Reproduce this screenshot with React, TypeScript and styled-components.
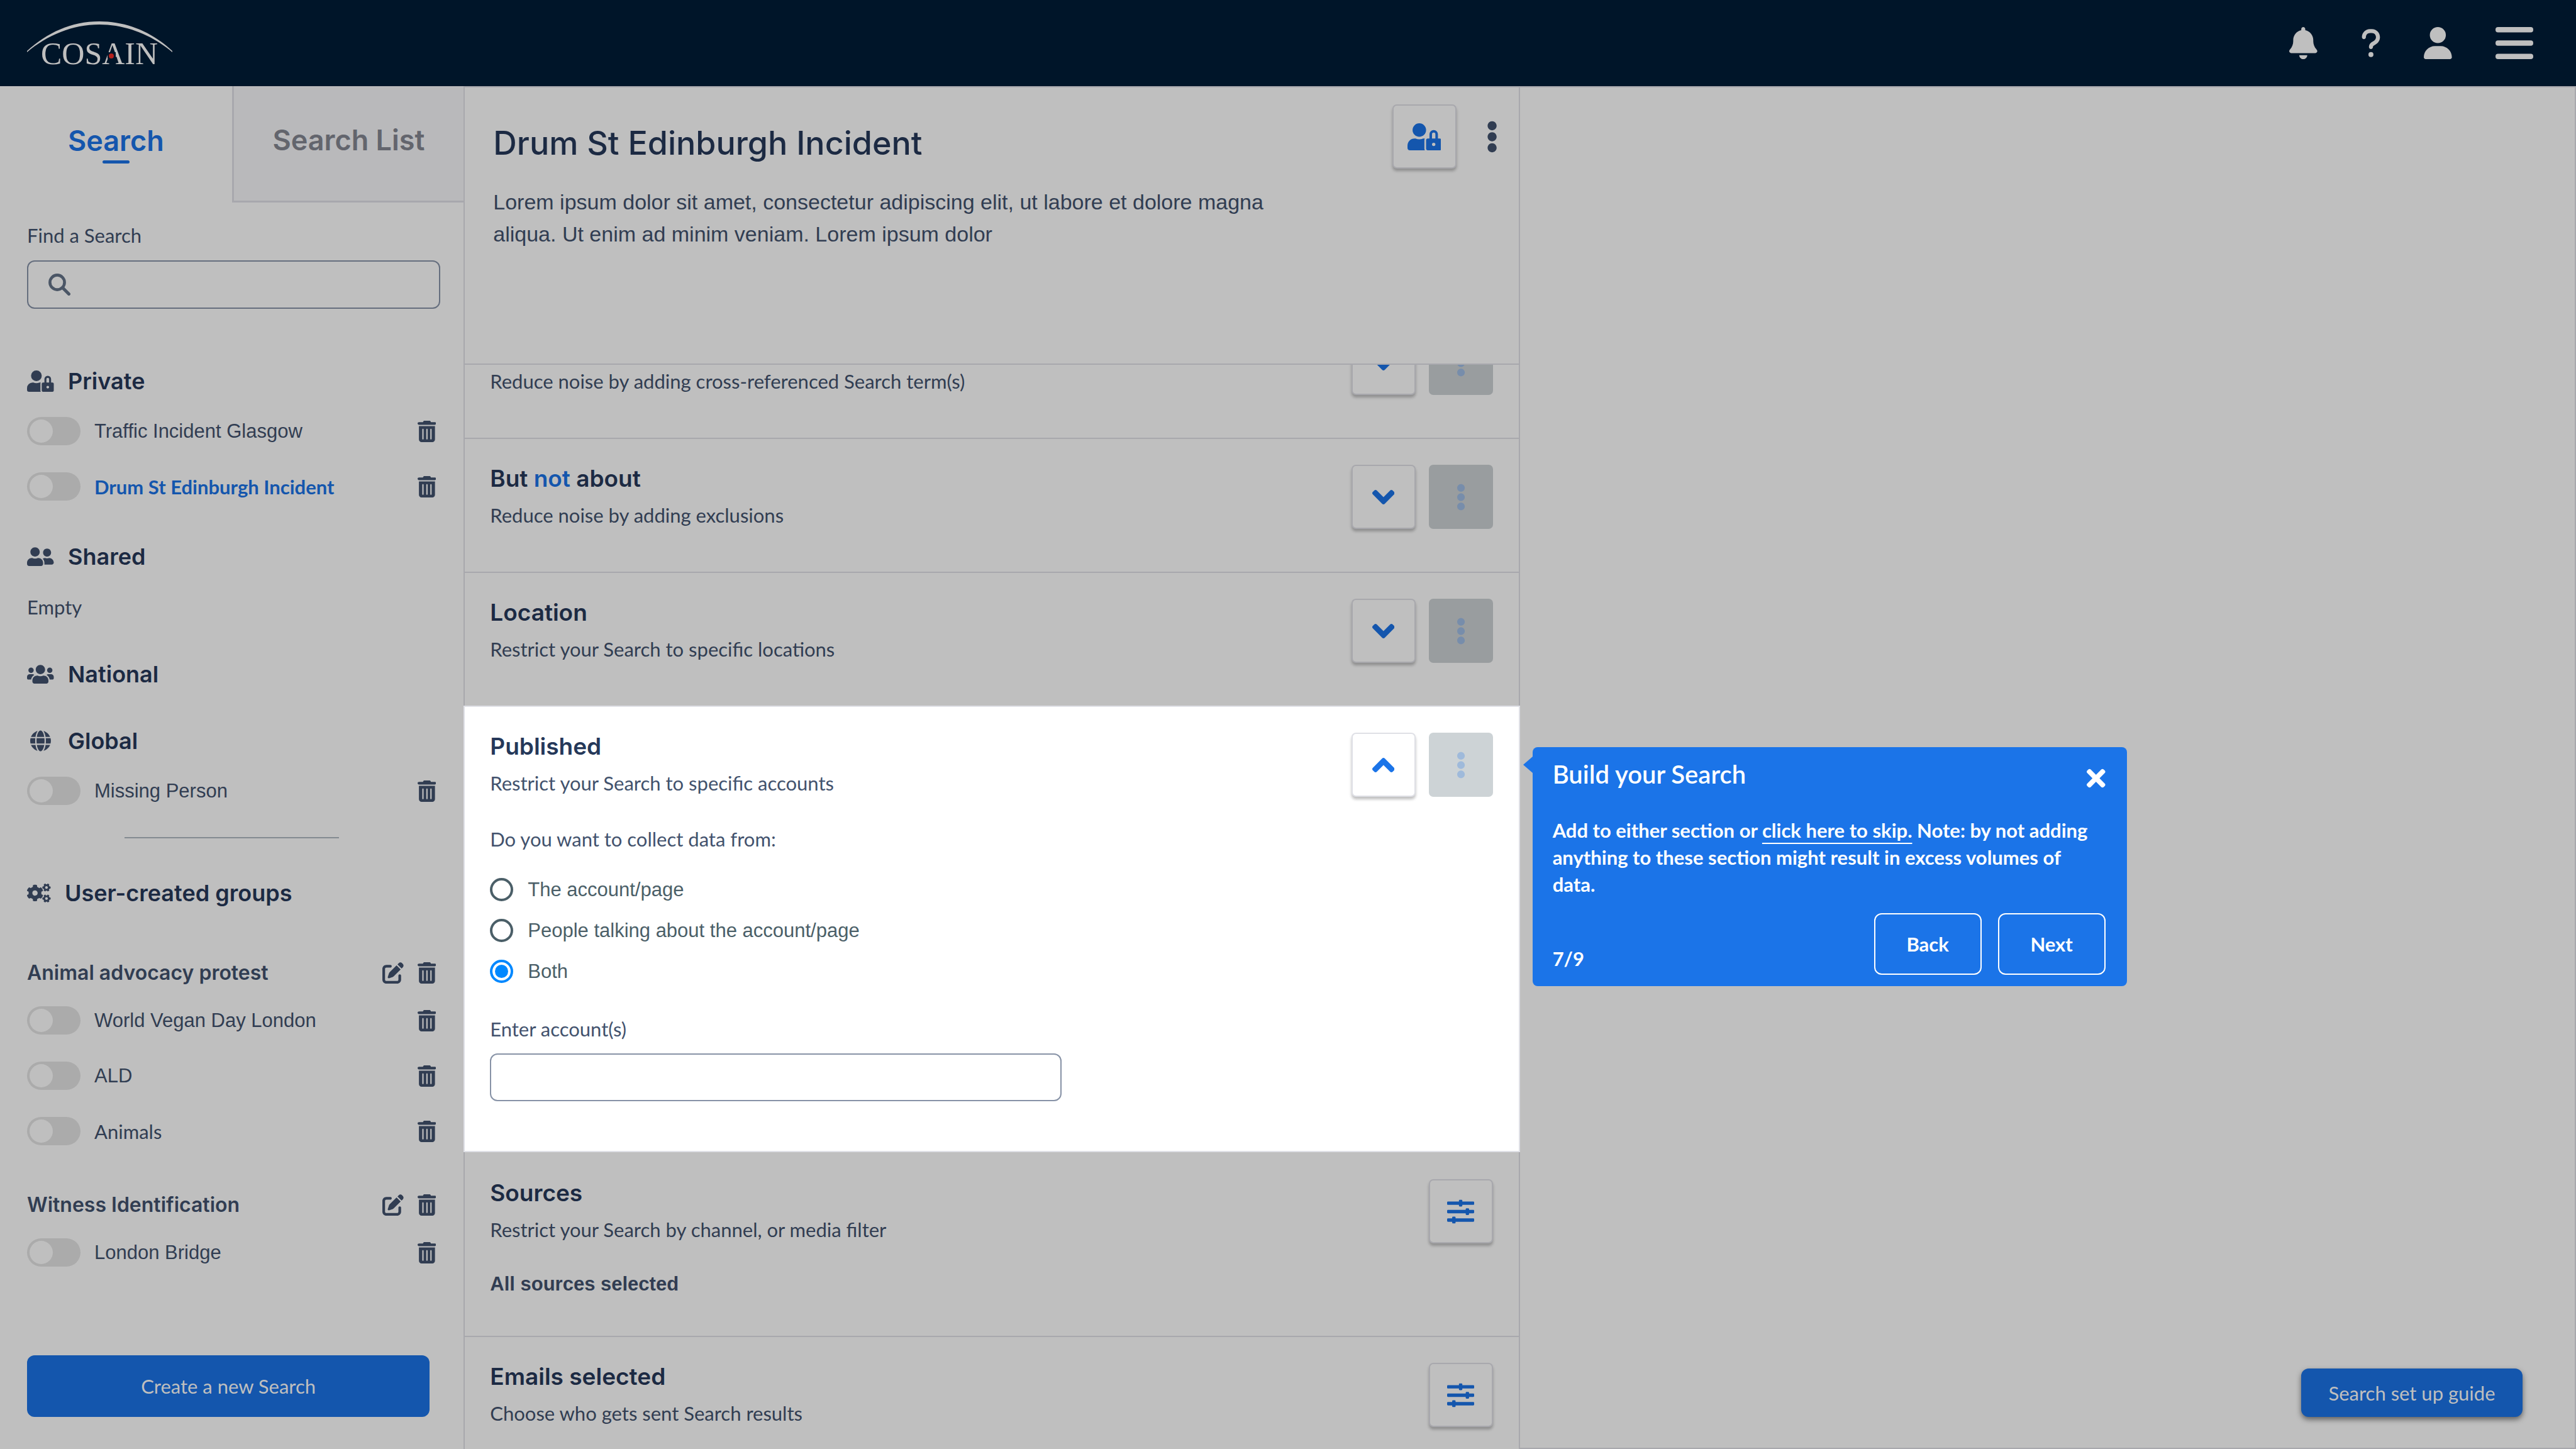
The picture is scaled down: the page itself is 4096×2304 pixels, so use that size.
import React, { useId, useLayoutEffect, useRef, useState } from "react";
import styled, { createGlobalStyle, css, ThemeProvider } from "styled-components";
import { IconContext } from "react-icons";
import {
  FaAngleDown,
  FaAngleUp,
  FaCogs,
  FaEllipsisV,
  FaGlobe,
  FaSlidersH,
  FaTimes,
  FaUserFriends,
  FaUserLock,
  FaUsers,
} from "react-icons/fa";
import { FaBell, FaPenToSquare, FaQuestion, FaTrashCan, FaUser } from "react-icons/fa6";

/* Palettes: the page sits behind the guide's backdrop, the current step is lit. */
const shaded = {
  surface: "#bfbfbf",
  line: "#a8a8ad",
  title: "#1c2a43",
  text: "#313d52",
  field: "#656e7e",
  accent: "#1456ad",
  mutedBg: "#999d9f",
  mutedFg: "#778dab",
};

const lit: typeof shaded = {
  surface: "#ffffff",
  line: "#dfe0e6",
  title: "#253859",
  text: "#42526d",
  field: "#8792a6",
  accent: "#1b74e8",
  mutedBg: "#cdd3d6",
  mutedFg: "#9fbadb",
};

type Palette = typeof shaded;
const c = (key: keyof Palette) => (p: { theme: any }) => (p.theme as Palette)[key];

const sans = `Lato, "Open Sans", sans-serif`;
const display = `Inter, "Open Sans", sans-serif`;
const plain = `"Liberation Sans", Arial, sans-serif`;

const GlobalStyle = createGlobalStyle`
  * { box-sizing: border-box; }
  body { margin: 0; background: #bfbfbf; font-family: ${sans}; font-size: 31px; line-height: 36px; font-optical-sizing: none; }
  h1, h2, h3, p, ul, fieldset { margin: 0; padding: 0; border: 0; font-weight: inherit; font-size: inherit; }
  ul { list-style: none; }
  button, input { font: inherit; }
  svg { display: block; }
`;

/* Icons take their width from their own proportions once a height is set. */
const iconDefaults = { size: "100%" };

const bareButton = css`
  padding: 0;
  border: 0;
  background: none;
  color: inherit;
  cursor: pointer;
`;

const Page = styled.div`
  display: grid;
  grid-template-rows: auto minmax(0, 1fr);
  height: 100vh;
  color: ${c("text")};
`;

/* Top bar */

const TopBar = styled.header`
  display: flex;
  align-items: center;
  justify-content: space-between;
  height: 137px;
  padding: 0 68px 0 43px;
  background: #001529;
  color: #bfbfbf;
`;

const TopActions = styled.nav`
  display: flex;
  gap: 69px;
`;

const TopButton = styled.button`
  ${bareButton}
  svg {
    width: auto;
    height: 51px;
  }
`;

const Columns = styled.div`
  display: grid;
  grid-template-columns: 18% 41% minmax(0, 1fr);
  min-height: 0;
`;

/* Sidebar */

const Sidebar = styled.aside`
  display: flex;
  flex-direction: column;
  min-height: 0;
  background: ${c("surface")};
`;

const Tabs = styled.div`
  display: grid;
  grid-template-columns: 1fr 1fr;
  height: 185px;
`;

const Tab = styled.button<{ $active?: boolean }>`
  ${bareButton}
  display: flex;
  flex-direction: column;
  align-items: center;
  justify-content: center;
  gap: 6px;
  font: 600 45px/50px ${display};
  color: ${(p) => (p.$active ? "#1456ad" : "#63656d")};
  ${(p) =>
    !p.$active &&
    css`
      background: #b9b9bb;
      border: solid ${c("line")};
      border-width: 0 0 3px 3px;
    `}
  &::after {
    content: "";
    width: 43px;
    height: 5px;
    border-radius: 3px;
    background: ${(p) => (p.$active ? "currentColor" : "transparent")};
  }
`;

const SidebarBody = styled.div`
  display: flex;
  flex: 1;
  flex-direction: column;
  padding: 34px 37px 51px 43px;
`;

const Finder = styled.form`
  display: flex;
  flex-direction: column;
  gap: 22px;
  margin-bottom: 98px;
`;

const FinderBox = styled.div`
  display: flex;
  align-items: center;
  gap: 20px;
  height: 77px;
  padding: 0 32px;
  border: 2px solid ${c("field")};
  border-radius: 12px;
  color: #4b5666;
`;

const FinderInput = styled.input`
  flex: 1;
  min-width: 0;
  border: 0;
  outline: 0;
  background: none;
  color: inherit;
`;

const GroupList = styled.div`
  display: flex;
  flex-direction: column;
  gap: 72px;
`;

const GroupTitle = styled.h2<{ $iconWidth?: number }>`
  display: flex;
  align-items: center;
  gap: 22px;
  height: 34px;
  font: 600 36px/34px ${display};
  color: ${c("title")};
  span {
    display: flex;
    justify-content: center;
    width: ${(p) => p.$iconWidth ?? 43}px;
    color: ${c("text")};
  }
  svg {
    width: auto;
    height: ${(p) => (p.$iconWidth ? 30 : 34)}px;
  }
`;

const Items = styled.ul`
  display: flex;
  flex-direction: column;
  gap: 43px;
  margin-top: 40px;
`;

const EmptyNote = styled.p`
  margin-top: 45px;
`;

const Row = styled.li`
  display: flex;
  align-items: center;
  gap: 22px;
  height: 45px;
  padding-right: 7px;
`;

type LabelKind = "plain" | "soft" | "current";

const labelFonts: Record<LabelKind, string> = {
  plain: `400 31px/36px ${plain}`,
  soft: `400 31px/36px ${sans}`,
  current: `700 31px/36px ${sans}`,
};

const RowLabel = styled.label<{ $kind: LabelKind }>`
  flex: 1;
  font: ${(p) => labelFonts[p.$kind]};
  color: ${(p) => (p.$kind === "current" ? "#1456ad" : "inherit")};
`;

const Switch = styled.input`
  appearance: none;
  flex: none;
  width: 85px;
  height: 45px;
  margin: 0;
  padding: 4px;
  border-radius: 23px;
  background: #ababab;
  cursor: pointer;
  &::before {
    content: "";
    display: block;
    width: 37px;
    height: 37px;
    border-radius: 50%;
    background: #bfbfbf;
  }
  &:checked::before {
    margin-left: auto;
  }
`;

const IconAction = styled.button`
  ${bareButton}
  svg {
    width: auto;
    height: 34px;
  }
`;

const Divider = styled.hr`
  width: 341px;
  height: 2px;
  margin: 51px auto 70px 155px;
  border: 0;
  background: #838a90;
`;

const SubGroup = styled.section<{ $first?: boolean }>`
  margin-top: ${(p) => (p.$first ? 93 : 78)}px;
  ${Items} {
    margin-top: 36px;
  }
`;

const SubGroupTitle = styled.div`
  display: flex;
  align-items: center;
  gap: 22px;
  height: 34px;
  padding-right: 7px;
  h3 {
    flex: 1;
    font: 600 32px/34px ${display};
  }
`;

const PrimaryButton = styled.button`
  ${bareButton}
  border-radius: 12px;
  background: #1456ad;
  color: #bfbfbf;
`;

const CreateButton = styled(PrimaryButton)`
  height: 98px;
  margin: auto 17px 0 0;
`;

/* Search builder */

const Builder = styled.main`
  display: flex;
  flex-direction: column;
  min-height: 0;
  background: ${c("surface")};
`;

const BuilderHeader = styled.header`
  display: flex;
  justify-content: space-between;
  height: 443px;
  flex: none;
  padding: 27px 33px 0 45px;
  border: 2px solid ${c("line")};
`;

const BuilderTitle = styled.h1`
  margin-top: 34px;
  font: 500 52px/56px ${display};
  color: ${c("title")};
`;

const BuilderText = styled.p`
  max-width: 1300px;
  margin-top: 40px;
  font: 400 34px/51px ${plain};
`;

const HeaderActions = styled.div`
  display: flex;
  gap: 47px;
  height: 102px;
`;

const MoreButton = styled.button`
  ${bareButton}
  svg {
    width: auto;
    height: 51px;
  }
`;

const Sections = styled.div`
  flex: 1;
  min-height: 0;
  overflow-y: auto;
  scrollbar-width: none;
`;

const Section = styled.section<{ $lit?: boolean; $afterLit?: boolean }>`
  min-height: 213px;
  padding: ${(p) => (p.$afterLit ? "43px 41px 64px 40px" : "41px 41px 68px 40px")};
  border: 2px solid ${c("line")};
  border-bottom-width: ${(p) => (p.$lit ? 2 : 0)}px;
  border-top-width: ${(p) => (p.$afterLit ? 0 : 2)}px;
  background: ${c("surface")};
  color: ${c("text")};
`;

const SectionHead = styled.div`
  display: flex;
  justify-content: space-between;
  height: 102px;
`;

const SectionTitle = styled.h2`
  height: 44px;
  margin-bottom: 18px;
  font: 600 37px/44px ${display};
  color: ${c("title")};
  em {
    font-style: normal;
    color: ${c("accent")};
  }
`;

const SectionActions = styled.div`
  display: flex;
  gap: 21px;
`;

const SquareButton = styled.button<{ $icon?: number }>`
  ${bareButton}
  display: grid;
  place-items: center;
  width: 102px;
  height: 102px;
  border: 2px solid ${c("line")};
  border-radius: 7px;
  background: ${c("surface")};
  box-shadow: 0 4px 4px rgba(0, 0, 0, 0.25);
  color: ${c("accent")};
  svg {
    width: auto;
    height: ${(p) => p.$icon ?? 43}px;
  }
  &:disabled {
    border: 0;
    background: ${c("mutedBg")};
    box-shadow: none;
    color: ${c("mutedFg")};
    cursor: default;
  }
`;

const Strong = styled.p`
  margin-top: 47px;
  font: 700 31px/36px ${plain};
`;

const Choices = styled.fieldset`
  display: flex;
  flex-direction: column;
  gap: 28px;
  margin-top: 49px;
  legend {
    margin-bottom: 44px;
    padding: 0;
  }
`;

const Choice = styled.label`
  display: flex;
  align-items: center;
  gap: 23px;
  height: 37px;
  font: 400 31px/36px ${plain};
  color: #4b5f68;
`;

const Radio = styled.input`
  appearance: none;
  display: grid;
  place-items: center;
  width: 37px;
  height: 37px;
  margin: 0;
  border: 4px solid #4b5f68;
  border-radius: 50%;
  &:checked {
    border-color: #0088ff;
  }
  &:checked::before {
    content: "";
    width: 21px;
    height: 21px;
    border-radius: 50%;
    background: #0088ff;
  }
`;

const Field = styled.div`
  display: flex;
  flex-direction: column;
  gap: 21px;
  margin-top: 55px;
  padding-bottom: 11px;
`;

const TextInput = styled.input`
  width: 57%;
  height: 76px;
  padding: 0 24px;
  border: 2px solid ${c("field")};
  border-radius: 12px;
  background: none;
  color: inherit;
`;

/* Results pane and guide */

const Results = styled.section`
  position: relative;
  display: flex;
  align-items: flex-end;
  justify-content: flex-end;
  padding: 0 83px 49px 0;
  border: solid ${c("line")};
  border-width: 2px 2px 2px 0;
  background: ${c("surface")};
`;

const GuideButton = styled(PrimaryButton)`
  width: 352px;
  height: 77px;
  box-shadow: 0 4px 8px rgba(0, 0, 0, 0.5);
`;

const Guide = styled.div`
  position: absolute;
  top: 1049px;
  left: 20px;
  width: 945px;
  padding: 22px 34px 18px 32px;
  border-radius: 8px;
  background: #1b74e8;
  color: #ffffff;
  font-weight: 700;
  &::before {
    content: "";
    position: absolute;
    top: 15px;
    left: -15px;
    border: solid transparent;
    border-width: 13px 15px 13px 0;
    border-right-color: #1b74e8;
  }
`;

const GuideHead = styled.div`
  display: flex;
  justify-content: space-between;
  align-items: flex-start;
  h2 {
    font: 600 40px/43px ${sans};
  }
`;

const CloseButton = styled.button`
  ${bareButton}
  padding-top: 6px;
  svg {
    width: auto;
    height: 43px;
  }
`;

const GuideText = styled.p`
  margin-top: 40px;
  padding-right: 16px;
  line-height: 43px;
`;

const SkipLink = styled.a`
  color: inherit;
  text-decoration: underline;
  text-decoration-thickness: 2px;
  text-underline-offset: 8px;
  text-decoration-skip-ink: none;
`;

const GuideFoot = styled.div`
  display: flex;
  align-items: flex-end;
  gap: 26px;
  margin-top: 24px;
`;

const StepCount = styled.span`
  flex: 1;
  padding-bottom: 8px;
`;

const OutlineButton = styled.button`
  ${bareButton}
  width: 171px;
  height: 98px;
  border: 2px solid #ffffff;
  border-radius: 12px;
  font-weight: 700;
`;

/* Drawings */

const Logo = () => (
  <svg width="231" height="90" viewBox="0 -10 231 90" role="img" aria-label="Cosain">
    <path
      d="M0 47C32 18 70 0 115 0S200 18 231 47V49C199 22 158 5 115 5S32 22 0 49Z"
      fill="#bfbfbf"
    />
    <text x="22" y="68" fontFamily="'Liberation Serif', serif" fontSize="50" fill="#bfbfbf">
      COSAIN
    </text>
    <rect x="128" y="49" width="13" height="10" fill="#001529" />
    <circle cx="134" cy="55" r="4" fill="#b5201c" />
  </svg>
);

const Menu = () => (
  <svg viewBox="0 0 60 51" fill="currentColor" aria-hidden="true">
    <rect width="60" height="8.5" rx="4" />
    <rect y="21.25" width="60" height="8.5" rx="4" />
    <rect y="42.5" width="60" height="8.5" rx="4" />
  </svg>
);

const Magnifier = () => (
  <svg width="35" height="35" viewBox="0 0 35 35" fill="none" stroke="currentColor" aria-hidden="true">
    <circle cx="14" cy="14" r="11.6" strokeWidth="4.6" />
    <path d="M22.5 22.5L32.5 32.5" strokeWidth="5" strokeLinecap="round" />
  </svg>
);

/* Composed parts */

function SearchRow({ name, kind = "plain" }: { name: string; kind?: LabelKind }) {
  const id = useId();
  const [on, setOn] = useState(false);
  return (
    <Row>
      <Switch id={id} type="checkbox" role="switch" checked={on} onChange={() => setOn(!on)} />
      <RowLabel htmlFor={id} $kind={kind}>
        {name}
      </RowLabel>
      <IconAction aria-label={`Delete ${name}`}>
        <FaTrashCan />
      </IconAction>
    </Row>
  );
}

type UserGroupProps = { name: string; first?: boolean; children: React.ReactNode };

function UserGroup({ name, first, children }: UserGroupProps) {
  return (
    <SubGroup $first={first}>
      <SubGroupTitle>
        <h3>{name}</h3>
        <IconAction aria-label={`Edit ${name}`}>
          <FaPenToSquare />
        </IconAction>
        <IconAction aria-label={`Delete ${name}`}>
          <FaTrashCan />
        </IconAction>
      </SubGroupTitle>
      <Items>{children}</Items>
    </SubGroup>
  );
}

type SectionHeaderProps = { title?: React.ReactNode; hint: string; action: "down" | "up" | "filter" };

function SectionHeader({ title, hint, action }: SectionHeaderProps) {
  return (
    <SectionHead>
      <div>
        <SectionTitle>{title}</SectionTitle>
        <p>{hint}</p>
      </div>
      <SectionActions>
        {action === "filter" ? (
          <SquareButton aria-label="Edit">
            <FaSlidersH />
          </SquareButton>
        ) : (
          <>
            <SquareButton $icon={57} aria-label={action === "up" ? "Collapse" : "Expand"}>
              {action === "up" ? <FaAngleUp /> : <FaAngleDown />}
            </SquareButton>
            <SquareButton disabled aria-label="More options">
              <FaEllipsisV />
            </SquareButton>
          </>
        )}
      </SectionActions>
    </SectionHead>
  );
}

const sources = ["The account/page", "People talking about the account/page", "Both"];

export default function App() {
  const [source, setSource] = useState("Both");
  const [accounts, setAccounts] = useState("");
  const list = useRef<HTMLDivElement>(null);

  useLayoutEffect(() => {
    if (list.current) list.current.scrollTop = 97;
  }, []);

  return (
    <ThemeProvider theme={shaded}>
      <IconContext.Provider value={iconDefaults}>
        <GlobalStyle />
        <Page>
          <TopBar>
            <Logo />
            <TopActions>
              <TopButton aria-label="Notifications">
                <FaBell />
              </TopButton>
              <TopButton aria-label="Help">
                <FaQuestion />
              </TopButton>
              <TopButton aria-label="Account">
                <FaUser />
              </TopButton>
              <TopButton aria-label="Menu">
                <Menu />
              </TopButton>
            </TopActions>
          </TopBar>

          <Columns>
            <Sidebar>
              <Tabs>
                <Tab $active>Search</Tab>
                <Tab>Search List</Tab>
              </Tabs>
              <SidebarBody>
                <Finder>
                  <label htmlFor="find">Find a Search</label>
                  <FinderBox>
                    <Magnifier />
                    <FinderInput id="find" type="text" />
                  </FinderBox>
                </Finder>

                <GroupList>
                  <section>
                    <GroupTitle>
                      <span>
                        <FaUserLock />
                      </span>
                      Private
                    </GroupTitle>
                    <Items>
                      <SearchRow name="Traffic Incident Glasgow" />
                      <SearchRow name="Drum St Edinburgh Incident" kind="current" />
                    </Items>
                  </section>
                  <section>
                    <GroupTitle>
                      <span>
                        <FaUserFriends />
                      </span>
                      Shared
                    </GroupTitle>
                    <EmptyNote>Empty</EmptyNote>
                  </section>
                  <section>
                    <GroupTitle>
                      <span>
                        <FaUsers />
                      </span>
                      National
                    </GroupTitle>
                  </section>
                  <section>
                    <GroupTitle>
                      <span>
                        <FaGlobe />
                      </span>
                      Global
                    </GroupTitle>
                    <Items>
                      <SearchRow name="Missing Person" />
                    </Items>
                  </section>
                </GroupList>

                <Divider />

                <GroupTitle $iconWidth={38}>
                  <span>
                    <FaCogs />
                  </span>
                  User-created groups
                </GroupTitle>
                <UserGroup first name="Animal advocacy protest">
                  <SearchRow name="World Vegan Day London" />
                  <SearchRow name="ALD" />
                  <SearchRow name="Animals" kind="soft" />
                </UserGroup>
                <UserGroup name="Witness Identification">
                  <SearchRow name="London Bridge" />
                </UserGroup>

                <CreateButton>Create a new Search</CreateButton>
              </SidebarBody>
            </Sidebar>

            <Builder>
              <BuilderHeader>
                <div>
                  <BuilderTitle>Drum St Edinburgh Incident</BuilderTitle>
                  <BuilderText>
                    Lorem ipsum dolor sit amet, consectetur adipiscing elit, ut labore et dolore magna aliqua. Ut enim
                    ad minim veniam. Lorem ipsum dolor
                  </BuilderText>
                </div>
                <HeaderActions>
                  <SquareButton aria-label="Private search">
                    <FaUserLock />
                  </SquareButton>
                  <MoreButton aria-label="More options">
                    <FaEllipsisV />
                  </MoreButton>
                </HeaderActions>
              </BuilderHeader>

              <Sections ref={list}>
                <Section>
                  <SectionHeader hint="Reduce noise by adding cross-referenced Search term(s)" action="down" />
                </Section>
                <Section>
                  <SectionHeader
                    title={
                      <>
                        But <em>not</em> about
                      </>
                    }
                    hint="Reduce noise by adding exclusions"
                    action="down"
                  />
                </Section>
                <Section>
                  <SectionHeader title="Location" hint="Restrict your Search to specific locations" action="down" />
                </Section>
                <ThemeProvider theme={lit}>
                  <Section $lit>
                    <SectionHeader title="Published" hint="Restrict your Search to specific accounts" action="up" />
                    <Choices>
                      <legend>Do you want to collect data from:</legend>
                      {sources.map((s) => (
                        <Choice key={s}>
                          <Radio type="radio" name="source" checked={source === s} onChange={() => setSource(s)} />
                          {s}
                        </Choice>
                      ))}
                    </Choices>
                    <Field>
                      <label htmlFor="accounts">Enter account(s)</label>
                      <TextInput
                        id="accounts"
                        type="text"
                        value={accounts}
                        onChange={(e) => setAccounts(e.target.value)}
                      />
                    </Field>
                  </Section>
                </ThemeProvider>
                <Section $afterLit>
                  <SectionHeader
                    title="Sources"
                    hint="Restrict your Search by channel, or media filter"
                    action="filter"
                  />
                  <Strong>All sources selected</Strong>
                </Section>
                <Section>
                  <SectionHeader title="Emails selected" hint="Choose who gets sent Search results" action="filter" />
                </Section>
              </Sections>
            </Builder>

            <Results>
              <Guide role="dialog" aria-labelledby="guide-title">
                <GuideHead>
                  <h2 id="guide-title">Build your Search</h2>
                  <CloseButton aria-label="Close guide">
                    <FaTimes />
                  </CloseButton>
                </GuideHead>
                <GuideText>
                  Add to either section or <SkipLink href="#skip">click here to skip.</SkipLink> Note: by not adding
                  anything to these section might result in excess volumes of data.
                </GuideText>
                <GuideFoot>
                  <StepCount>7/9</StepCount>
                  <OutlineButton>Back</OutlineButton>
                  <OutlineButton>Next</OutlineButton>
                </GuideFoot>
              </Guide>
              <GuideButton>Search set up guide</GuideButton>
            </Results>
          </Columns>
        </Page>
      </IconContext.Provider>
    </ThemeProvider>
  );
}
